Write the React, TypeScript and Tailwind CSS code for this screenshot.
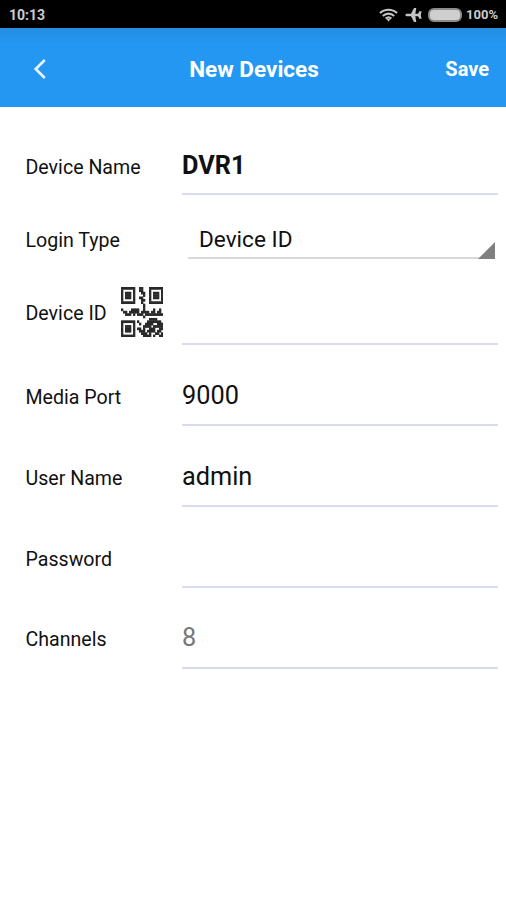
import type { ReactNode } from "react";

const QR = [
  "111111100110001111111",
  "100000100110001000001",
  "101110100011001011101",
  "101110100001001011101",
  "101110100110001011101",
  "100000100011001000001",
  "111111100010001111111",
  "000000000001000000000",
  "000000000001000000000",
  "100001111001000010010",
  "011011111011110110110",
  "001110101110111111111",
  "000000000001000000000",
  "000000000000001111000",
  "111111101000011111110",
  "100000100100111100111",
  "101110100001111011111",
  "101110101101001110011",
  "101110100111011110110",
  "100000100011101001101",
  "111111100001111010011",
];

function QrCode() {
  return (
    <svg width="42" height="50" viewBox="0 0 21 21" preserveAspectRatio="none" className="block shrink-0" fill="#292929">
      {QR.flatMap((row, y) =>
        row.split("").map((c, x) => (c === "1" ? <rect key={`${x}-${y}`} x={x} y={y} width="1.15" height="1.15" /> : null)),
      )}
    </svg>
  );
}

function Row({ label, row, value, icon }: { label: string; row: string; value: ReactNode; icon?: ReactNode }) {
  return (
    <div className={`flex pr-2 pl-[25.5px] ${row}`}>
      <div className="flex w-[156.5px] shrink-0 text-[19.6px] leading-[30px] whitespace-nowrap">
        <span>{label}</span>
        {icon}
      </div>
      {value}
    </div>
  );
}

const field = "flex-1 border-b-2 border-[#d9dbee] text-[25.3px] leading-[26px]";

export default function App() {
  return (
    <div className="h-[900px] w-[506px] overflow-hidden bg-white font-['Roboto',sans-serif] text-[#111]">
      <div className="flex h-7 items-center bg-black pr-2 pl-[9px] text-[14px] font-bold text-[#ccc]">
        <span className="flex-1 pt-0.5">10:13</span>
        <svg width="19" height="14" viewBox="0 0 20 14" fill="none" stroke="#c4c4c4" strokeWidth="2.2" className="mt-0.5">
          <path d="M1 5C6 .2 14 .2 19 5M4 8C7.5 4.7 12.5 4.7 16 8M7 10.8C8.8 9.2 11.2 9.2 13 10.8" />
          <path d="M8 11.3h4L10 14z" fill="#c4c4c4" stroke="none" />
        </svg>
        <svg width="17" height="14" viewBox="0 0 17 14" fill="#c4c4c4" className="mt-0.5 ml-[7px]">
          <path d="M0 7L1.5 5.8H6L9 0H11.3L10.3 5.8H13L14.5 3.2H16.6L15.8 7L16.6 10.8H14.5L13 8.2H10.3L11.3 14H9L6 8.2H1.5z" />
        </svg>
        <span className="mt-0.5 ml-1.5 h-[14px] w-[34px] rounded-[6px] border-2 border-[#8b8b8b] bg-[#cfcfcf]" />
        <span className="ml-1 pt-0.5 text-[13px]">100%</span>
      </div>
      <header className="flex h-[79px] items-center bg-linear-to-b from-[#238de0] from-0% to-[#2497f2] to-20% pt-[2px] text-white">
        <div className="w-[100px] pl-[33px]">
          <svg width="14" height="20" viewBox="0 0 14 20" fill="none" stroke="#eaf5ff" strokeWidth="2.6">
            <path d="M11.8 1L2.7 10L11.8 19" />
          </svg>
        </div>
        <h1 className="flex-1 pt-[3px] text-center text-[22.5px] font-bold">New Devices</h1>
        <div className="w-[98px] pr-[17px] text-right text-[20px] font-bold">Save</div>
      </header>
      <main>
        <Row label="Device Name" row="h-[88px] pt-[46px]" value={<div className={`${field} font-bold`}>DVR1</div>} />
        <Row
          label="Login Type"
          row="h-16 pt-[31px]"
          value={
            <div className="mr-[3px] ml-1.5 flex flex-1 items-end border-b-2 border-[#d9d9d9] pl-[11px] text-[22.6px] leading-7">
              <span className="flex-1 self-start">Device ID</span>
              <svg width="17" height="17" viewBox="0 0 17 17" fill="#808080" className="-mb-0.5">
                <path d="M17 0V17H0z" />
              </svg>
            </div>
          }
        />
        <Row
          label="Device ID"
          row="h-[86px] pt-10"
          icon={
            <div className="-mt-3 mr-[19px] ml-auto">
              <QrCode />
            </div>
          }
          value={<div className={field} />}
        />
        <Row label="Media Port" row="h-[81px] pt-[38px]" value={<div className={field}>9000</div>} />
        <Row label="User Name" row="h-[81px] pt-[38px]" value={<div className={field}>admin</div>} />
        <Row label="Password" row="h-[81px] pt-[38px]" value={<div className={field} />} />
        <Row label="Channels" row="h-[81px] pt-[37px]" value={<div className={`${field} text-[#777]`}>8</div>} />
      </main>
    </div>
  );
}
